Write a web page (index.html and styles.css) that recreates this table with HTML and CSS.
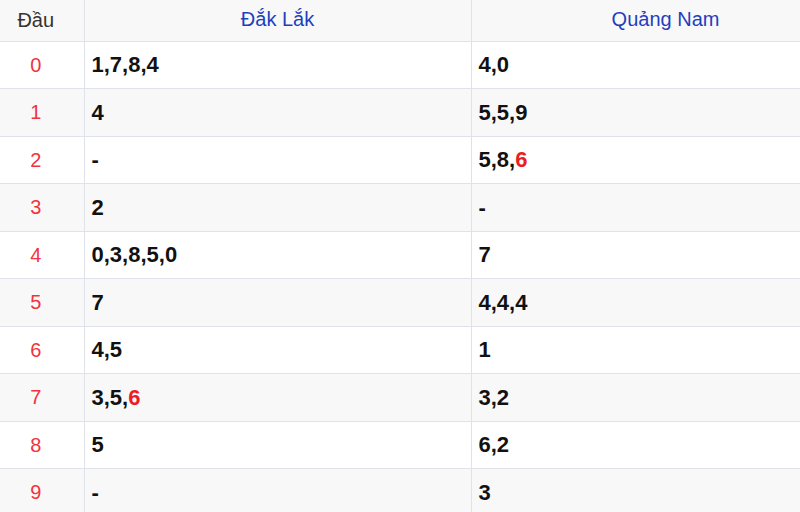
FILE: index.html
```html
<!DOCTYPE html>
<html>
<head>
<meta charset="utf-8">
<link rel="stylesheet" href="styles.css">
</head>
<body>
<div class="wrap">
<table class="loto">
  <colgroup><col class="c-head"><col class="c-a"><col class="c-b"></colgroup>
  <thead>
    <tr><th class="h-dau">Đầu</th><th class="h-prov">Đắk Lắk</th><th class="h-prov">Quảng Nam</th></tr>
  </thead>
  <tbody>
    <tr><td class="dau">0</td><td class="num">1,7,8,4</td><td class="num">4,0</td></tr>
    <tr><td class="dau">1</td><td class="num">4</td><td class="num">5,5,9</td></tr>
    <tr><td class="dau">2</td><td class="num">-</td><td class="num">5,8,<span class="hot">6</span></td></tr>
    <tr><td class="dau">3</td><td class="num">2</td><td class="num">-</td></tr>
    <tr><td class="dau">4</td><td class="num">0,3,8,5,0</td><td class="num">7</td></tr>
    <tr><td class="dau">5</td><td class="num">7</td><td class="num">4,4,4</td></tr>
    <tr><td class="dau">6</td><td class="num">4,5</td><td class="num">1</td></tr>
    <tr><td class="dau">7</td><td class="num">3,5,<span class="hot">6</span></td><td class="num">3,2</td></tr>
    <tr><td class="dau">8</td><td class="num">5</td><td class="num">6,2</td></tr>
    <tr><td class="dau">9</td><td class="num">-</td><td class="num">3</td></tr>
  </tbody>
</table>
</div>
</body>
</html>
```
FILE: styles.css
```css
html, body { margin: 0; padding: 0; background: #fff; overflow: hidden; }
body { font-family: "Liberation Sans", Arial, sans-serif; }
.wrap { width: 800px; height: 512px; overflow: hidden; }
.loto { border-collapse: collapse; width: 860px; table-layout: fixed; }
.c-head { width: 84px; }
.c-a { width: 387px; }
.c-b { width: 389px; }
.loto th, .loto td { border: 1px solid #dfe2e8; padding: 1px 7px 0; vertical-align: middle; }
.loto tr > :first-child { border-left: none; padding: 1px 12px 0 0; }
.loto thead tr > * { border-top: none; padding-top: 0; padding-bottom: 1px; }
.loto thead tr { height: 41px; background: #f8f8f8; }
.loto th { font-weight: normal; font-size: 20px; text-align: center; }
.h-dau { color: #333; }
.h-prov { color: #1f3fbf; }
.loto tbody tr { height: 47.5px; }
.loto tbody tr:nth-child(even) { background: #f8f8f8; }
.dau { text-align: center; color: #f2333d; font-size: 20px; }
.num { font-weight: bold; font-size: 22px; color: #111; }
.hot { color: #ec1c24; }
```
